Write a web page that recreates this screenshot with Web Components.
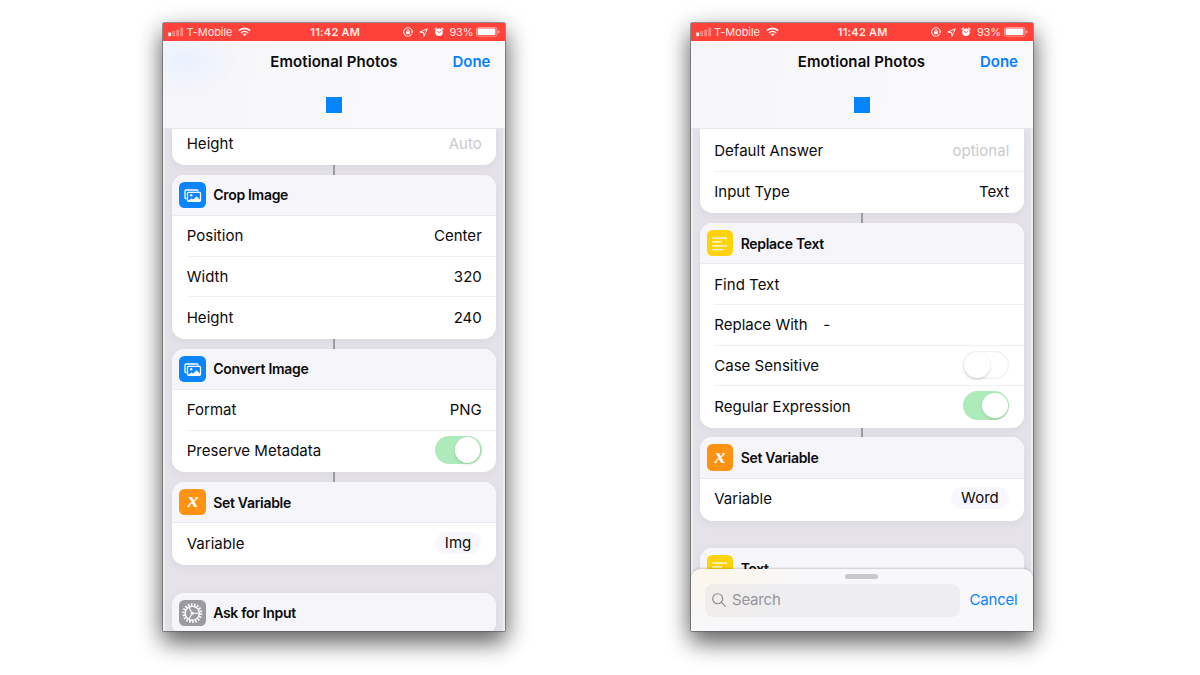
<!DOCTYPE html>
<html lang="en">
<head>
<meta charset="utf-8">
<title>Emotional Photos</title>
<style>
html,body{margin:0;height:100%;background:#fff;overflow:hidden}
body{font-family:Inter,"Liberation Sans",sans-serif;color:#0b0b0d}
main{display:flex;gap:185.5px;padding:23px 0 0 163px}
</style>
</head>
<body>
<main>
  <phone-screen tint="blue">
    <action-card cut style="--pull:-5.7px">
      <param-row label="Height" value="Auto" muted></param-row>
    </action-card>
    <action-card icon="image" name="Crop Image" linked>
      <param-row label="Position" value="Center"></param-row>
      <param-row label="Width" value="320"></param-row>
      <param-row label="Height" value="240"></param-row>
    </action-card>
    <action-card icon="image" name="Convert Image" linked>
      <param-row label="Format" value="PNG"></param-row>
      <param-row label="Preserve Metadata"><toggle-switch on></toggle-switch></param-row>
    </action-card>
    <action-card icon="variable" name="Set Variable" linked>
      <param-row label="Variable"><token-pill>Img</token-pill></param-row>
    </action-card>
    <action-card icon="gear" name="Ask for Input" apart></action-card>
  </phone-screen>
  <phone-screen>
    <action-card cut style="--lead:2px">
      <param-row label="Default Answer" value="optional" muted></param-row>
      <param-row label="Input Type" value="Text"></param-row>
    </action-card>
    <action-card icon="text" name="Replace Text" linked>
      <param-row label="Find Text"></param-row>
      <param-row label="Replace With" inline="-"></param-row>
      <param-row label="Case Sensitive"><toggle-switch></toggle-switch></param-row>
      <param-row label="Regular Expression"><toggle-switch on></toggle-switch></param-row>
    </action-card>
    <action-card icon="variable" name="Set Variable" linked>
      <param-row label="Variable"><token-pill>Word</token-pill></param-row>
    </action-card>
    <action-card icon="text" name="Text" apart></action-card>
    <search-sheet slot="sheet"></search-sheet>
  </phone-screen>
</main>
<script>
const define = (name, render) => customElements.define(name, class extends HTMLElement {
  connectedCallback() {
    if (this.shadowRoot) return;
    this.attachShadow({ mode: 'open' }).innerHTML = render(this);
  }
});

define('status-bar', () => `
<style>
:host{display:grid;grid-template-columns:1fr auto 1fr;align-items:center;height:18px;flex:none;background:#ff4239;color:#ffe9e6;font-size:11px;padding:0 5px 0 5px;box-sizing:border-box}
div{display:flex;align-items:center}
.carrier{letter-spacing:-.05px;margin:0 6px 0 2.5px}
.time{font-weight:600;letter-spacing:.24px;padding-left:2.5px}
.right{justify-content:flex-end}
.pct{margin:0 2.5px 0 5px;letter-spacing:-.1px}
svg{display:block;flex:none}
</style>
<div>
  <svg width="16" height="10" viewBox="0 0 16 10"><g fill="#fff"><rect x=".3" y="5.6" width="2.8" height="3.6" rx=".6"/><g opacity=".35"><rect x="4.3" y="4" width="2.8" height="5.2" rx=".6"/><rect x="8.3" y="2.4" width="2.8" height="6.8" rx=".6"/><rect x="12.3" y=".6" width="2.8" height="8.6" rx=".6"/></g></g></svg>
  <span class="carrier">T-Mobile</span>
  <svg width="13" height="10" viewBox="0 0 13 10" fill="none" stroke="#fff" stroke-width="1.6"><path d="M.8 3.7a8.2 8.2 0 0 1 11.4 0"/><path d="M2.9 6a5.2 5.2 0 0 1 7.2 0"/><path d="M6.5 9.3 4.6 7.4a2.8 2.8 0 0 1 3.8 0z" fill="#fff" stroke="none"/></svg>
</div>
<div class="time">11:42 AM</div>
<div class="right">
  <svg width="10" height="10" viewBox="0 0 10 10" fill="none" stroke="#fff" stroke-width="1"><path d="M8.9 6.8A4.3 4.3 0 1 1 9.3 5"/><path d="m8 4.5 1.3 1.2L10 4.2"/><rect x="3.1" y="4.5" width="3.8" height="2.7" fill="#fff" stroke="none"/><path d="M3.8 4.8v-.9a1.2 1.2 0 0 1 2.4 0v.9" stroke-width=".8"/></svg>
  <svg style="margin-left:6px" width="9" height="9" viewBox="0 0 9 9" fill="none" stroke="#fff" stroke-width="1" stroke-linejoin="round"><path d="M8.3.8.8 4.1l3.6.5.5 3.7z"/></svg>
  <svg style="margin:0 .5px 0 5.5px" width="10" height="10" viewBox="0 0 10 10"><circle cx="5" cy="5.3" r="3.8" fill="#fff"/><path d="M.6 2.6 2.5.8M9.4 2.6 7.5.8" stroke="#fff" stroke-width="1.2"/><path d="m3.2 4.2 1.8 1.5L6.8 4" fill="none" stroke="#ff4239" stroke-width=".9"/></svg>
  <span class="pct">93%</span>
  <svg width="24" height="10" viewBox="0 0 24 10"><rect x=".5" y=".5" width="20.4" height="8.7" rx="2" fill="none" stroke="#ffb0aa" stroke-width=".8"/><rect x="1.6" y="1.6" width="17.8" height="6.5" rx="1" fill="#fff"/><path d="M22 3.2q1.5.3 1.5 1.6T22 6.5z" fill="#ffb0aa"/></svg>
</div>`);

define('nav-header', host => `
<style>
:host{display:flex;flex-direction:column;align-items:center;height:87px;flex:none;box-sizing:content-box;border-bottom:1px solid #e6e5e9;
background:${host.hasAttribute('tinted') ? 'radial-gradient(ellipse 50px 36px at 24px 20px,#eaf1fd 0%,#f0f4fc 55%,transparent 100%),' : ''}linear-gradient(100deg,#f6f5f8,#f9f8fa 60%)}
.bar{display:grid;grid-template-columns:1fr auto 1fr;align-items:center;width:100%;height:42px}
h1{grid-column:2;margin:0;font-size:15px;line-height:18px;font-weight:600;letter-spacing:.08px}
a{justify-self:end;margin-right:14.5px;font-size:15px;line-height:18px;font-weight:600;color:#087fff;letter-spacing:.02px}
.stop{width:16px;height:16px;background:#0584ff;margin-top:14px}
</style>
<div class="bar"><h1>Emotional Photos</h1><a>Done</a></div><div class="stop"></div>`);

define('phone-screen', host => `
<style>
:host{display:flex;flex-direction:column;width:342px;height:608px;flex:none;position:relative;overflow:visible;border-radius:2px 2px 1px 1px;background:#e5e3e9;
box-shadow:0 0 0 1px rgba(90,90,90,.6),0 12px 22px rgba(0,0,0,.42),0 7px 26px rgba(0,0,0,.36)}
.list{flex:1;min-height:0;overflow:hidden;padding:0 9px;box-shadow:inset 2px 0 0 #eeedf2,inset -2px 0 0 #eeedf2}
</style>
<status-bar></status-bar>
<nav-header ${host.hasAttribute('tint') ? 'tinted' : ''}></nav-header>
<div class="list"><slot></slot></div>
<slot name="sheet"></slot>`);

const glyphs = {
  image: ['#0a84ff', '<g fill="none" stroke="#fff" stroke-width="1.3" stroke-linejoin="round"><path d="M7.7 16.7H7a1 1 0 0 1-1-1V9a1 1 0 0 1 1-1h11a1 1 0 0 1 1 1v.4"/><rect x="8.5" y="10.3" width="13" height="9" rx="1"/></g><circle cx="12.2" cy="13.2" r="1.2" fill="#fff"/><path d="m9 19 3.2-2.6 2 1.2 3.2-3.3 4 3.6V19z" fill="#fff"/>'],
  variable: ['#ff9311', ''],
  text: ['#ffd20a', '<path d="M5.2 8h14.8M5.2 11.9h9.8M5.2 15.8h14.8M5.2 19.6h10.8" stroke="#fff" stroke-width="1.25"/>'],
  gear: ['#9c9ba1', `<g fill="none" stroke="#fff"><circle cx="13.25" cy="13.25" r="7.1" stroke-width="1.5"/><circle cx="13.25" cy="13.25" r="8.8" stroke-width="2.4" stroke-dasharray="1.5 1.572"/><g stroke-width="1.1"><path d="M13.25 13.25h7M13.25 13.25l-3.5-6M13.25 13.25l-3.5 6"/></g></g><circle cx="13.25" cy="13.25" r="1.6" fill="#fff"/>`]
};

define('action-icon', host => {
  const kind = host.getAttribute('kind'), [color, art] = glyphs[kind];
  return `
<style>
:host{display:flex;align-items:center;justify-content:center;width:26.5px;height:26.5px;border-radius:5.5px;background:${color};flex:none}
svg{display:block}
span{font:italic 700 20px/20px "Liberation Serif",serif;color:#fff;margin-top:-4px;transform:scaleX(1.1)}
</style>${kind === 'variable' ? '<span>x</span>' : `<svg width="26.5" height="26.5" viewBox="0 0 26.5 26.5">${art}</svg>`}`;
});

define('action-card', host => {
  const icon = host.getAttribute('icon'), has = n => host.hasAttribute(n);
  return `
<style>
:host{display:flex;flex-direction:column;${has('cut') ? 'margin-top:var(--pull,0px)' : has('apart') ? 'margin-top:27.5px' : ''}}
.link{width:2px;height:9.5px;background:#9d9ca2;align-self:center}
.card{border-radius:${has('cut') ? '0 0 12.5px 12.5px' : '12.5px'};overflow:hidden;background:#fff;padding:var(--lead,0px) 0 1.2px;box-shadow:0 2px 8px rgba(70,60,90,.07)}
header{display:flex;align-items:center;gap:7.5px;height:40.5px;padding-left:7.2px;background:#f6f5fa;border-bottom:1px solid #ebeaef;font-size:14px;font-weight:600;letter-spacing:-.3px}
</style>
${has('linked') ? '<div class="link"></div>' : ''}
<div class="card">${icon ? `<header><action-icon kind="${icon}"></action-icon><span>${host.getAttribute('name')}</span></header>` : ''}<slot></slot></div>`;
});

define('param-row', host => `
<style>
:host{display:block;padding-left:14.7px}
.row{display:flex;align-items:center;height:40.6px;box-sizing:border-box;padding:.1px 14.2px 0 0;border-bottom:1px solid #f0eff2;font-size:15px;letter-spacing:.03px}
:host(:last-child) .row{border-bottom-color:transparent}
.inline{margin-left:15.5px}
.end{margin-left:auto;color:${host.hasAttribute('muted') ? '#cbcace' : 'inherit'}}
</style>
<div class="row"><span>${host.getAttribute('label')}</span>${host.hasAttribute('inline') ? `<span class="inline">${host.getAttribute('inline')}</span>` : ''}<span class="end">${host.getAttribute('value') || '<slot></slot>'}</span></div>`);

define('toggle-switch', host => {
  const on = host.hasAttribute('on');
  return `
<style>
:host{display:flex;align-items:center;width:46.5px;height:28.5px;border-radius:15px;box-sizing:border-box;padding:1.5px;margin-top:-.8px;
justify-content:${on ? 'flex-end' : 'flex-start'};background:${on ? '#aeebbb' : '#fff'};${on ? '' : 'box-shadow:inset 0 0 0 1.3px #f1f0f2;'}}
i{width:25.5px;height:25.5px;border-radius:50%;background:#fff;box-shadow:0 1.5px 3px rgba(0,0,0,${on ? '.13' : '.16'})}
</style><i></i>`;
});

define('token-pill', () => `
<style>
:host{display:block;background:#f8f7fd;border-radius:12px;padding:0 10px;line-height:22px;height:22px;margin:-1px .5px 0 0}
</style><slot></slot>`);

define('search-sheet', () => `
<style>
:host{position:absolute;left:0;right:0;bottom:0;height:62px;box-sizing:border-box;display:flex;flex-direction:column;align-items:center;border-radius:9px 9px 0 0;background:radial-gradient(ellipse 90px 50px at 25px 8px,#fbf7ec,transparent),#f8f7fa;box-shadow:0 -1px 2px rgba(0,0,0,.17)}
.grab{width:33px;height:4.5px;border-radius:3px;background:#c9c8cc;margin-top:5px}
.bar{display:flex;align-items:center;align-self:stretch;margin-top:5.5px;padding:0 15px 0 14.5px}
.field{display:flex;align-items:center;width:254.5px;height:33px;border-radius:8px;background:linear-gradient(100deg,#f0ede9,#eeedf0 30%);color:#96959a;font-size:15px;letter-spacing:-.2px;box-sizing:border-box;padding:0 0 1.5px 7px;gap:6px}
a{margin:-1.5px 0 0 auto;color:#0a84ff;font-size:15px;letter-spacing:-.2px}
</style>
<div class="grab"></div>
<div class="bar"><div class="field"><svg width="14" height="14" viewBox="0 0 14 14" fill="none" stroke="#8f8e93" stroke-width="1.15" stroke-linecap="round"><circle cx="5.7" cy="5.7" r="5"/><path d="m9.4 9.4 3.9 3.9"/></svg><span>Search</span></div><a>Cancel</a></div>`);
</script>
</body>
</html>
